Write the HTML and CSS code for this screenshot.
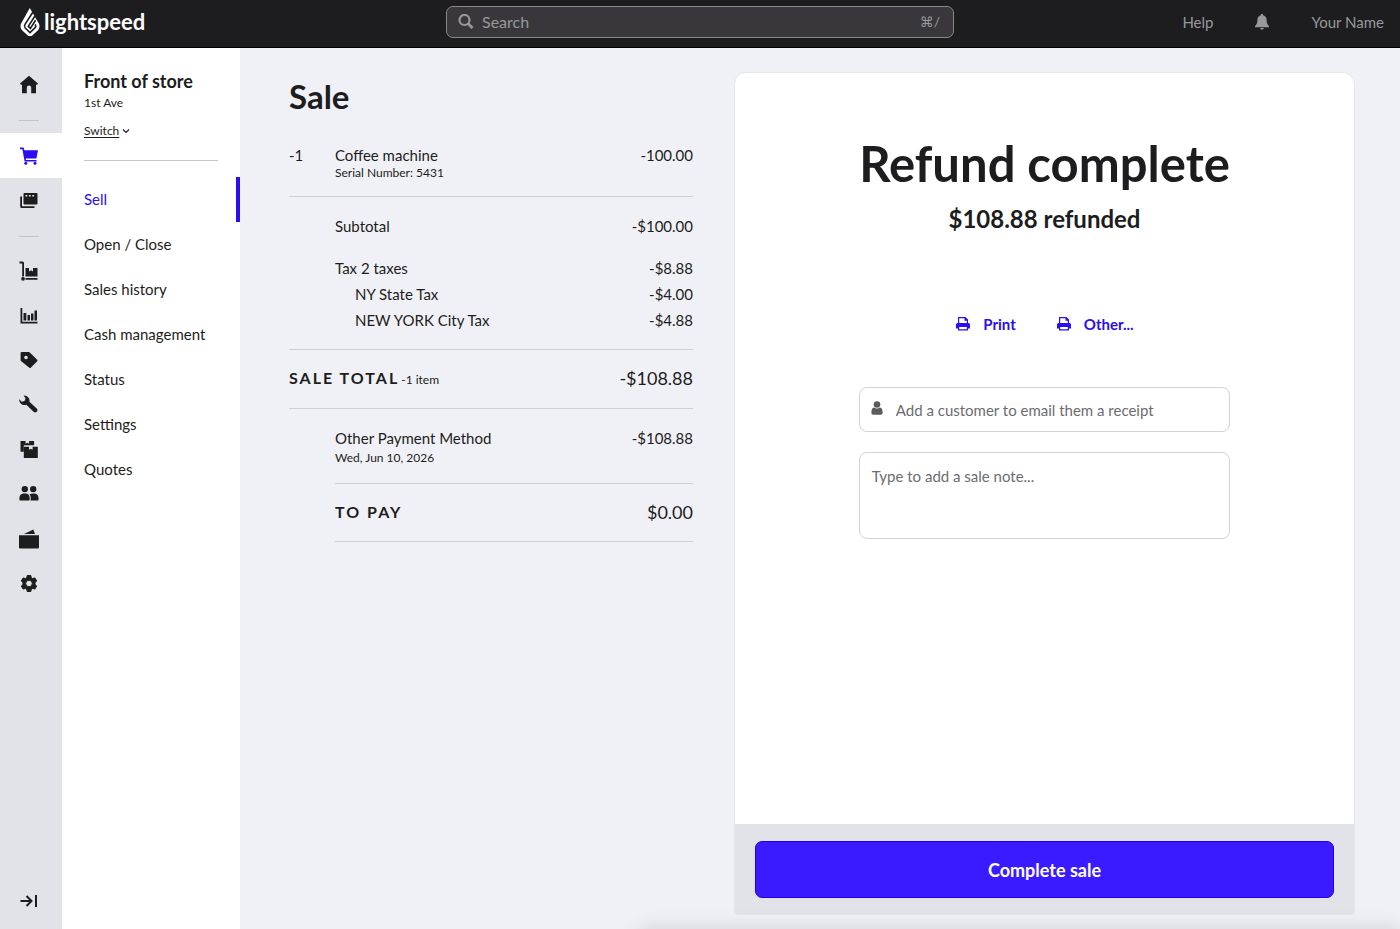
FILE: index.html
```html
<!DOCTYPE html>
<html lang="en">
  <head>
    <meta charset="UTF-8" />
    <meta name="viewport" content="width=device-width, initial-scale=1.0" />
    <title>Sale - Refund complete</title>
    <link rel="stylesheet" href="styles.css">
  </head>
  <body>
    <header class="topbar">
      <a class="logo" href="#">
        <svg width="20" height="28" viewBox="0 0 20 28">
          <path fill="#fff" d="M9.800 0 12.400 4.600 13.600 6.600 15.800 10.600 18.600 15c1.500 2.600 1.100 5.300-.9 7.400L12.500 27.200a3.600 3.600 0 0 1-5 0L2.300 22.400C.3 20.300-.1 17.600 1.400 15z" />
          <path fill="none" stroke="#1d1d20" stroke-width="1.600" d="M12.800 4.200 5 16.400c-.8 1.300-.7 2.600.2 3.600L10 24.600l4.900-4.700c1-1 1.100-2.300.3-3.600" />
          <path fill="none" stroke="#1d1d20" stroke-width="1.600" d="M14.800 8.200 8.300 18.400 10.300 20.400 15.600 12.200" />
        </svg>
        <span>lightspeed</span>
      </a>
      <label class="search">
        <svg width="16" height="16" viewBox="0 0 16 16" fill="none" stroke="#98989b" stroke-width="2.2">
          <circle cx="6.500" cy="6" r="5" />
          <path d="M10.200 9.700 14.500 14" stroke-width="2.800" />
        </svg>
        <input type="text" placeholder="Search" aria-label="Search" />
        <kbd>⌘/</kbd>
      </label>
      <nav class="top-links">
        <a href="#">Help</a>
        <button class="bell" aria-label="Notifications">
          <svg width="16" height="16" viewBox="0 0 16 16" fill="#98989b">
            <path d="M8 0c.8 0 1.200.5 1.200 1.200C11.600 1.800 12.600 3.600 12.600 6c0 3.200.9 4.800 2.400 6v1.200H1V12c1.500-1.200 2.400-2.800 2.400-6 0-2.400 1-4.200 3.400-4.800C6.800.5 7.200 0 8 0zM6.200 14h3.600a1.800 1.800 0 0 1-3.600 0z" />
          </svg>
        </button>
        <a href="#">Your Name</a>
      </nav>
    </header>

    <div class="layout">
      <nav class="rail" aria-label="Main">
        <a class="rail-item" href="#" aria-label="Home">
          <svg viewBox="0 0 20 20"><path d="M10 .8 19 8.600l-1 1.300-1-.7v9h-4.800v-5.400a2.200 2.200 0 0 0-4.400 0v5.400H3v-9l-1 .7-1-1.300z" /></svg>
        </a>
        <hr />
        <a class="rail-item active" href="#" aria-label="Sell">
          <svg viewBox="0 0 20 20"><path d="M1 1.500h3.600l.8 2.700H19l-1.600 8.200H6.600l.4 1.600h10.500v1.400H5.600L3.400 3.200H1z" /><circle cx="6.800" cy="17.200" r="1.500" /><circle cx="16" cy="17.200" r="1.500" /></svg>
        </a>
        <a class="rail-item" href="#" aria-label="Registers">
          <svg viewBox="0 0 20 20"><path fill-rule="evenodd" d="M5.500 2h12a1 1 0 0 1 1 1v9.500a1 1 0 0 1-1 1h-12a1 1 0 0 1-1-1V3a1 1 0 0 1 1-1zm1 2v1.600h1.800V4zm3.400 0v1.600h1.800V4zm3.400 0v1.600h1.800V4z" /><path d="M1.200 5.500H3v9.700h12.500V17H2.700a1.500 1.500 0 0 1-1.500-1.500z" /></svg>
        </a>
        <hr />
        <div class="rail-group">
          <a class="rail-item" href="#" aria-label="Inventory">
            <svg viewBox="0 0 20 20"><path d="M.5.500h3a1.500 1.500 0 0 1 1.500 1.500v13.500H3.200V2.400H.5zM6.500 7H10v3.500l2-1.300 2 1.300V7h4.500v8.500h-12zM6.500 17h12v1.800h-12z" /><circle cx="4" cy="17.800" r="1.900" /></svg>
          </a>
          <a class="rail-item" href="#" aria-label="Reporting">
            <svg viewBox="0 0 20 20"><path d="M1.500 2h1.800v13.700h15.200v1.800h-17zM4.500 7h2.800v7.500H4.500zM8.500 9h2.500v5.500H8.500zM12 7.500h2.500v7H12zM15.500 4.500H18v10h-2.500z" /></svg>
          </a>
          <a class="rail-item" href="#" aria-label="Catalog">
            <svg viewBox="0 0 20 20"><path fill-rule="evenodd" d="M2.500 1h7.300a1.500 1.500 0 0 1 1 .4l7.400 7.400a1 1 0 0 1 0 1.400l-6.500 6.500a1 1 0 0 1-1.400 0L2 9.900a1.500 1.500 0 0 1-.4-1V2a1 1 0 0 1 .9-1zM7 4.700a1.800 1.800 0 1 0 0 3.600 1.800 1.800 0 0 0 0-3.600z" /></svg>
          </a>
          <a class="rail-item" href="#" aria-label="Services">
            <svg viewBox="0 0 20 20"><path d="M4.600.5A5.200 5.200 0 0 1 10.400 6.800l7.600 7a2.300 2.300 0 0 1-3.200 3.200L7.400 9.700A5.200 5.200 0 0 1 .3 4.200L2.800 6.700 5.600 6 6.500 3.300z" /></svg>
          </a>
          <a class="rail-item" href="#" aria-label="Products">
            <svg viewBox="0 0 20 20"><path d="M1.500 1h5v2.700l1.800-1 1.800 1V1h5v4.300H4.800v6.400H1.500z" /><path d="M4.800 6.700H10v3l1.800-1 1.800 1v-3h5.200V18h-14z" /></svg>
          </a>
          <a class="rail-item" href="#" aria-label="Customers">
            <svg viewBox="0 0 20 20"><circle cx="5.800" cy="5.100" r="3.200" /><circle cx="14.200" cy="5.100" r="3.200" /><path d="M.4 15c0-4 1.600-5.500 5.300-5.500s5 1.500 5 5.500c0 1-.4 1.500-1.200 1.500H1.600C.8 16.500.4 16 .4 15zM11.500 16.500c.5-2.500.3-5-1-6.300 1-.5 2.200-.7 3.800-.7 3.700 0 5.300 1.500 5.300 5.500 0 1-.4 1.500-1.200 1.500z" /></svg>
          </a>
          <a class="rail-item" href="#" aria-label="Payments">
            <svg viewBox="0 0 20 20"><path d="M0 6.200h20V18.500a1 1 0 0 1-1 1H1a1 1 0 0 1-1-1zM5 5 14.300.4 16 5z" /></svg>
          </a>
          <a class="rail-item" href="#" aria-label="Setup">
            <svg viewBox="0 0 20 20"><path fill-rule="evenodd" stroke="#1d1d20" stroke-linejoin="round" d="M8.200 1.500h3.600l.5 2.300 1.400.8 2.200-.7 1.800 3.100-1.700 1.600v1.800l1.700 1.600-1.800 3.100-2.200-.7-1.400.8-.5 2.300H8.200l-.5-2.300-1.400-.8-2.200.7L2.300 12 4 10.400V8.600L2.300 7l1.800-3.100 2.200.7 1.400-.8zM10 6.200a3.300 3.300 0 1 0 0 6.600 3.300 3.300 0 0 0 0-6.600z" /></svg>
          </a>
        </div>
        <button class="rail-item rail-toggle" aria-label="Toggle menu">
          <svg viewBox="0 0 20 20"><path d="M1.500 10h11M7.500 5l5 5-5 5M17 4v12" fill="none" stroke="#1d1d20" stroke-width="2" /></svg>
        </button>
      </nav>

      <aside class="side">
        <div class="store">
          <h2>Front of store</h2>
          <p>1st Ave</p>
          <a class="switch" href="#"><span>Switch</span>
            <svg width="8" height="6" viewBox="0 0 8 6" fill="none" stroke="#1d1d20" stroke-width="1.200"><path d="M1 1.500 4 4.500 7 1.500" /></svg>
          </a>
        </div>
        <nav class="menu" aria-label="Sell">
          <a class="current" href="#">Sell</a>
          <a href="#">Open / Close</a>
          <a href="#">Sales history</a>
          <a href="#">Cash management</a>
          <a href="#">Status</a>
          <a href="#">Settings</a>
          <a href="#">Quotes</a>
        </nav>
      </aside>

      <main class="content">
        <section class="sale">
          <h1>Sale</h1>
          <div class="block item">
            <span class="qty">-1</span>
            <div class="grow">
              <div>Coffee machine</div>
              <div class="small">Serial Number: 5431</div>
            </div>
            <span>-100.00</span>
          </div>
          <div class="block totals">
            <div class="row subtotal"><span>Subtotal</span><span>-$100.00</span></div>
            <div class="row"><span>Tax 2 taxes</span><span>-$8.88</span></div>
            <div class="row tax"><span>NY State Tax</span><span>-$4.00</span></div>
            <div class="row tax"><span>NEW YORK City Tax</span><span>-$4.88</span></div>
          </div>
          <div class="block row total">
            <span><strong>SALE TOTAL</strong><span class="small">-1 item</span></span>
            <span class="amount">-$108.88</span>
          </div>
          <div class="indent">
            <div class="block payment">
              <div class="row"><span>Other Payment Method</span><span>-$108.88</span></div>
              <div class="small">Wed, Jun 10, 2026</div>
            </div>
            <div class="block row total">
              <strong>TO PAY</strong>
              <span class="amount">$0.00</span>
            </div>
          </div>
        </section>

        <section class="card">
          <div class="card-body">
            <h2>Refund complete</h2>
            <p class="refunded">$108.88 refunded</p>
            <div class="actions">
              <button>
                <svg width="16" height="16" viewBox="0 0 16 16"><path fill-rule="evenodd" d="M3 1h7.500L13 3.500V7h.5A1.500 1.500 0 0 1 15 8.500V12.500h-2V14.500H3v-2H1v-4A1.500 1.500 0 0 1 2.500 7H3zm1.200 1.200V7h7.600V4.700H9.500V2.200zM4.200 11v2.300h7.600V11z" /></svg>
                Print
              </button>
              <button>
                <svg width="16" height="16" viewBox="0 0 16 16"><path fill-rule="evenodd" d="M3 1h7.500L13 3.500V7h.5A1.500 1.500 0 0 1 15 8.500V12.500h-2V14.500H3v-2H1v-4A1.500 1.500 0 0 1 2.500 7H3zm1.200 1.200V7h7.600V4.700H9.500V2.200zM4.200 11v2.300h7.600V11z" /></svg>
                Other...
              </button>
            </div>
            <label class="customer">
              <svg width="12" height="18" viewBox="0 0 12 18" fill="#5b5b5e"><circle cx="6" cy="3.500" r="3.300" /><path d="M3 6.500c1.800 1.300 4.200 1.300 6 0 1.800.3 2.600 2 2.600 5 0 1.500-.6 2.200-1.800 2.200H2.200C1 13.700.4 13 .4 11.500c0-3 .8-4.700 2.600-5z" /></svg>
              <input type="text" placeholder="Add a customer to email them a receipt" aria-label="Customer" />
            </label>
            <textarea class="note" placeholder="Type to add a sale note..." aria-label="Sale note"></textarea>
          </div>
          <div class="card-footer">
            <button class="complete">Complete sale</button>
          </div>
        </section>
      </main>
    </div>
  </body>
</html>
```
FILE: styles.css
```css
* {
  margin: 0;
  padding: 0;
  box-sizing: border-box;
}

body {
  display: flex;
  flex-direction: column;
  min-height: 100vh;
  background: #f0f1f7;
  color: #1d1d20;
  font-family: Lato, "Liberation Sans", sans-serif;
  font-size: 15px;
  line-height: 20px;
}

/* soft shadow along the bottom edge of the window */
body::after {
  content: "";
  position: fixed;
  top: 100%;
  left: 640px;
  right: 0;
  height: 20px;
  box-shadow: 0 0 20px rgba(0, 0, 0, 0.15);
}

a {
  color: inherit;
  text-decoration: none;
}

button,
input,
textarea {
  font: inherit;
  color: inherit;
  border: none;
  background: none;
  outline: none;
}

button {
  cursor: pointer;
}

/* top bar */
.topbar {
  display: grid;
  grid-template-columns: 1fr 508px 1fr;
  align-items: center;
  height: 48px;
  padding: 0 16px 4px;
  background: #1d1d20;
  border-bottom: 1px solid #000;
  color: #98989b;
}

.logo {
  display: flex;
  align-items: center;
  gap: 4px;
  padding-left: 4px;
  color: #fff;
  font-size: 22px;
  font-weight: 700;
}

.search {
  display: flex;
  align-items: center;
  height: 32px;
  padding: 0 13px 0 11px;
  background: #39373c;
  border: 1px solid #88888b;
  border-radius: 7px;
}

.search input {
  flex: 1;
  min-width: 0;
  padding-left: 8px;
  font-size: 16px;
}

.search input::placeholder {
  color: #98989b;
}

.search kbd {
  font-family: Lato, "DejaVu Sans", sans-serif;
  font-size: 14px;
}

.top-links {
  display: flex;
  justify-content: flex-end;
  align-items: center;
  gap: 41px;
}

.bell svg {
  display: block;
}

/* layout */
.layout {
  flex: 1;
  display: flex;
}

.rail {
  display: flex;
  flex-direction: column;
  width: 62px;
  padding: 14px 0 6px;
  background: #e2e3e9;
}

.rail hr {
  width: 20px;
  margin: 13px 0 12px 19px;
  border: none;
  border-top: 1px solid #c4c4c9;
}

.rail-item {
  display: flex;
  justify-content: center;
  align-items: center;
  height: 45px;
  padding-right: 4px;
}

.rail-item svg {
  width: 20px;
  height: 20px;
  fill: #1d1d20;
}

.rail-item.active {
  background: #fff;
}

.rail-item.active svg {
  fill: #2a0df0;
}

.rail-group {
  display: grid;
  grid-auto-rows: 1fr;
  height: 357px;
}

.rail-group .rail-item {
  height: auto;
}

.rail-toggle {
  margin-top: auto;
}

.side {
  width: 178px;
  background: #fff;
}

.store {
  margin: 0 22px;
  padding: 20px 0 19px;
  border-bottom: 1px solid #c9c9cc;
  font-size: 12px;
}

.store h2 {
  font-size: 18px;
  line-height: 26px;
}

.store p {
  line-height: 18px;
}

.switch {
  display: flex;
  align-items: center;
  gap: 3px;
  margin-top: 9px;
}

.switch span {
  text-decoration: underline;
  text-underline-offset: 2px;
}

.menu {
  margin-top: 16px;
}

.menu a {
  display: block;
  padding-left: 22px;
  line-height: 45px;
}

.menu .current {
  color: #2a0df0;
  border-right: 4px solid #2a0df0;
}

.content {
  flex: 1;
  display: grid;
  grid-template-columns: 404fr 621fr;
  gap: 41px;
  padding: 24px 45px 14px 49px;
}

/* sale */
.sale h1 {
  margin-bottom: 25px;
  font-size: 33px;
  line-height: 48px;
}

.block {
  border-bottom: 1px solid #cfcfd4;
}

.row {
  display: flex;
  justify-content: space-between;
}

.small {
  font-size: 12px;
  line-height: 16px;
}

.item {
  display: flex;
  padding-bottom: 15px;
}

.qty {
  width: 46px;
}

.grow {
  flex: 1;
}

.totals {
  padding: 19px 0 19px 46px;
}

.subtotal {
  margin-bottom: 22px;
}

.tax {
  margin-top: 6px;
  padding-left: 20px;
}

.total {
  align-items: center;
  padding: 18px 0 20px;
}

.total strong {
  font-size: 16px;
  letter-spacing: 2px;
}

.total .small {
  margin-left: 2px;
}

.amount {
  font-size: 18px;
}

.indent {
  margin-left: 46px;
}

.payment {
  padding: 19px 0 15px;
}

.payment .small {
  line-height: 20px;
}

.payment + .total {
  padding-bottom: 19px;
}

/* refund card */
.card {
  display: flex;
  flex-direction: column;
  background: #fff;
  border: 1px solid #e5e5ea;
  border-radius: 12px 12px 3px 3px;
  overflow: hidden;
}

.card-body {
  flex: 1;
  width: 60%;
  margin: 0 auto;
  padding-top: 60px;
  text-align: center;
}

.card-body h2 {
  font-size: 49px;
  line-height: 60px;
  white-space: nowrap;
}

.refunded {
  margin-top: 10px;
  font-size: 24px;
  font-weight: 700;
  line-height: 32px;
}

.actions {
  display: flex;
  justify-content: center;
  gap: 40px;
  margin: 79px 0 53px;
}

.actions button {
  display: flex;
  align-items: center;
  gap: 12px;
  color: #2a0df0;
  fill: #2a0df0;
  font-weight: 700;
}

.customer,
.note {
  width: 100%;
  border: 1px solid #d2d2d8;
  border-radius: 8px;
}

.customer {
  display: flex;
  align-items: center;
  height: 45px;
  padding: 0 11px;
}

.customer input {
  flex: 1;
  min-width: 0;
  padding-left: 13px;
}

.note {
  display: block;
  height: 87px;
  margin-top: 20px;
  padding: 13px 12px;
  resize: none;
}

.customer input::placeholder,
.note::placeholder {
  color: #6c6c70;
}

.card-footer {
  padding: 17px 20px 16px;
  background: #e2e3e9;
}

.complete {
  width: 100%;
  height: 57px;
  background: #3a1aff;
  border: 1px solid #2000e8;
  border-radius: 7px;
  color: #fff;
  font-size: 18px;
  font-weight: 700;
}
```
